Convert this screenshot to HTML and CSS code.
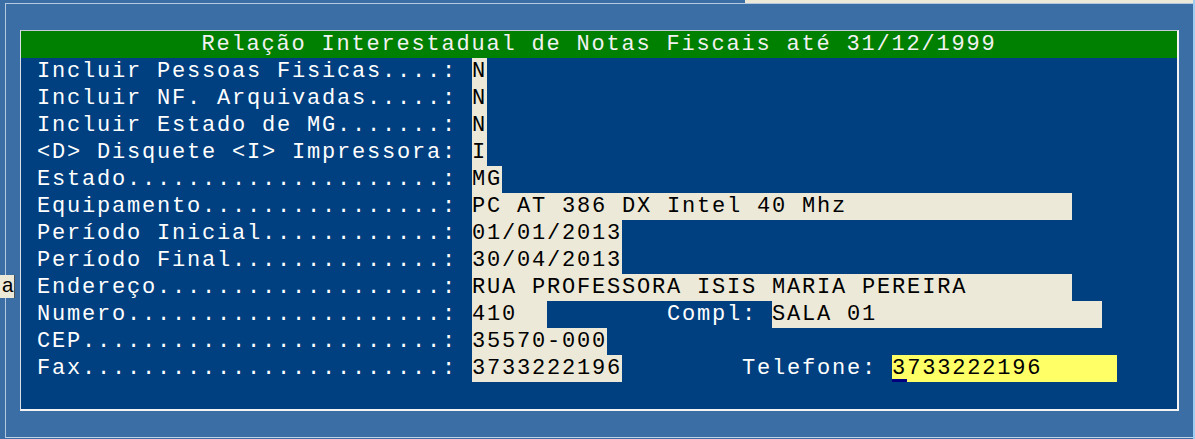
FILE: index.html
```html
<!DOCTYPE html>
<html lang="pt">
<head>
    <meta charset="UTF-8">
    <title>Relação Interestadual de Notas Fiscais</title>
    <link rel="stylesheet" href="styles.css">
</head>
<body>
    <div class="screen">
        <div class="desk">
            <div class="strip"></div>
            <div class="frame">
                <div class="window">
                    <div class="title">Relação Interestadual de Notas Fiscais até 31/12/1999</div>
                    <div class="form">
                        <div class="row">Incluir Pessoas Fisicas....: <span class="field w1">N</span></div>
                        <div class="row">Incluir NF. Arquivadas.....: <span class="field w1">N</span></div>
                        <div class="row">Incluir Estado de MG.......: <span class="field w1">N</span></div>
                        <div class="row">&lt;D&gt; Disquete &lt;I&gt; Impressora: <span class="field w1">I</span></div>
                        <div class="row">Estado.....................: <span class="field w2">MG</span></div>
                        <div class="row">Equipamento................: <span class="field w40">PC AT 386 DX Intel 40 Mhz</span></div>
                        <div class="row">Período Inicial............: <span class="field w10">01/01/2013</span></div>
                        <div class="row">Período Final..............: <span class="field w10">30/04/2013</span></div>
                        <div class="row">Endereço...................: <span class="field w40">RUA PROFESSORA ISIS MARIA PEREIRA</span></div>
                        <div class="row">Numero.....................: <span class="field w5">410</span>        Compl: <span class="field w22">SALA 01</span></div>
                        <div class="row">CEP........................: <span class="field w9">35570-000</span></div>
                        <div class="row">Fax........................: <span class="field w10">3733222196</span>        Telefone: <span class="field active w15"><span class="cursor">3</span>733222196</span></div>
                    </div>
                </div>
            </div>
        </div>
        <div class="edge"></div>
    </div>

    <!-- edge of a text box from the window behind -->
    <div class="behind">a</div>
</body>
</html>
```

FILE: styles.css
```css
body {
    margin: 0;
    background: #3a6ea5;
    overflow: hidden;
}
.screen {
    display: flex;
    width: 1195px;
    height: 439px;
}
.desk {
    flex: 1;
    display: flex;
    flex-direction: column;
    padding: 0 0 1px 5px;
}
.strip {
    height: 3px;
    margin-left: 740px;
    background: #ece9d8;
}
.frame {
    flex: 1;
    border-top: 1px solid #b4c8e0;
    border-left: 1px solid #b4c8e0;
    border-bottom: 1px solid #c4d4e8;
}
.edge {
    width: 2px;
    background: #9fcdf2;
}
.window {
    width: 1156px;
    height: 378px;
    margin: 26px 0 0 14px;
    background: #004080;
    border-top: 1px solid #c8ccd4;
    border-left: 1px solid #dde0e6;
    border-right: 2px solid #f4f4f4;
    border-bottom: 2px solid #f4f4f4;
    font-family: "Courier New", "Nimbus Mono PS", "Nimbus Mono L", FreeMono, "Liberation Mono", monospace;
    font-size: 22px;
    letter-spacing: 1.8px;
    line-height: 27px;
    color: #ffffff;
}
.title {
    height: 27px;
    background: #008000;
    color: #f2f2f2;
    text-align: center;
    white-space: pre;
}
.form {
    padding-left: 16px;
}
.row {
    height: 27px;
    white-space: pre;
}
.field {
    display: inline-block;
    vertical-align: top;
    height: 27px;
    background: #ece9d8;
    color: #000;
}
.field.active {
    background: #ffff66;
}
.cursor {
    display: inline-block;
    vertical-align: top;
    height: 27px;
    box-shadow: inset 0 -3px #000080;
}
.w1 { width: 15px; }
.w2 { width: 30px; }
.w5 { width: 75px; }
.w9 { width: 135px; }
.w10 { width: 150px; }
.w15 { width: 225px; }
.w22 { width: 330px; }
.w40 { width: 600px; }
.behind {
    position: absolute;
    left: 0;
    top: 275px;
    width: 14px;
    height: 23px;
    background: #ece9d8;
    border-right: 1px solid #505050;
    font-family: "Courier New", "Nimbus Mono PS", FreeMono, "Liberation Mono", monospace;
    font-size: 21px;
    line-height: 23px;
    text-align: right;
    color: #000;
    overflow: hidden;
}
```
